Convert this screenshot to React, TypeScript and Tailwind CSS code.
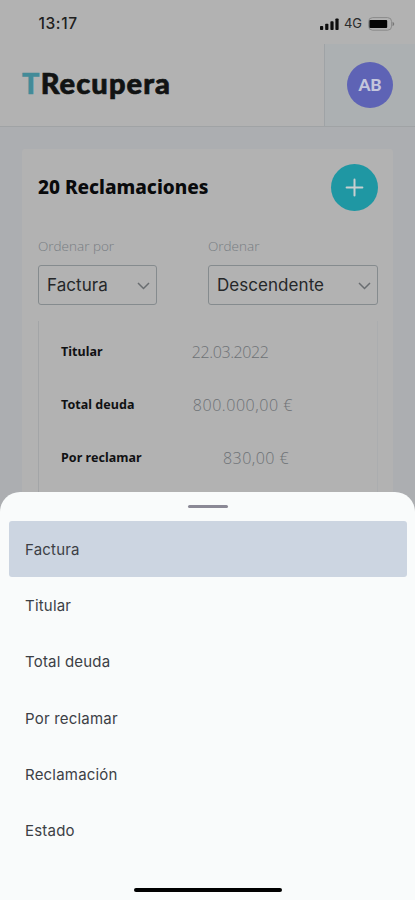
import { useState } from 'react';
import clsx from 'clsx';
import { Plus } from 'lucide-react';

const options = ['Factura', 'Titular', 'Total deuda', 'Por reclamar', 'Reclamación', 'Estado'];

const rows = [
  { label: 'Titular', value: '22.03.2022', style: 'pr-[108.5px] tracking-[-0.4px]' },
  { label: 'Total deuda', value: '800.000,00 €', style: 'pr-[84px] tracking-[0.55px]' },
  { label: 'Por reclamar', value: '830,00 €', style: 'pr-[88px] tracking-[0.45px]' },
];

function StatusBar() {
  return (
    <div className="flex h-11 shrink-0 items-center justify-between pt-[3px] pr-[20px] pl-[38.5px]">
      <span className="font-['Inter',sans-serif] text-[15.5px] font-medium tracking-[0.6px] text-[#202020]">13:17</span>
      <div className="flex items-center">
        <svg width="19" height="12" viewBox="0 0 19 12" fill="#0d0d0d">
          <rect x="0" y="8" width="3.2" height="4" rx="0.8" />
          <rect x="5.2" y="5.8" width="3.2" height="6.2" rx="0.8" />
          <rect x="10.4" y="3.2" width="3.2" height="8.8" rx="0.8" />
          <rect x="15.4" y="0.4" width="3.2" height="11.6" rx="0.8" />
        </svg>
        <span className="ml-[5px] w-[18px] font-['Inter',sans-serif] text-[13px] tracking-[-0.2px] text-[#2b2b2b]">4G</span>
        <svg className="ml-[6px]" width="27" height="14" viewBox="0 0 27 14" fill="none">
          <rect x="0.6" y="0.6" width="23" height="12.6" rx="4" stroke="#8a8a8a" />
          <rect x="1.4" y="3" width="17.8" height="8" rx="1" fill="#050505" />
          <path d="M24.6 4.8v4.4c1-.4 1.6-1.3 1.6-2.2s-.6-1.8-1.6-2.2z" fill="#777" />
        </svg>
      </div>
    </div>
  );
}

function Header() {
  return (
    <header className="flex h-[83px] shrink-0 border-b border-[#a0a3a5]">
      <div className="flex flex-1 items-center pb-[5px] pl-[22px] font-['Lato',sans-serif] text-[29px] leading-none font-black tracking-[1.1px]">
        <span className="text-[#438b98] [-webkit-text-stroke:0.4px_#438b98]">T</span>
        <span className="text-[#111313] [-webkit-text-stroke:0.7px_#111313]">Recupera</span>
      </div>
      <div className="flex w-[91px] items-center border-l border-[#9fa3a6] bg-[#acb0b2] pl-[22px]">
        <div className="flex size-[46px] items-center justify-center rounded-full bg-[#5e63b5] font-['Lato',sans-serif] text-[17px] font-black text-[#c4c6dc]">
          AB
        </div>
      </div>
    </header>
  );
}

function Select({ label, value, className }: { label: string; value: string; className: string }) {
  return (
    <div className={className}>
      <div className="h-[28px] font-['Open_Sans',sans-serif] text-[13.5px] leading-[18px] font-light text-[#777d82]">{label}</div>
      <button
        type="button"
        className="flex h-10 w-full items-center justify-between rounded-[3px] border border-[#858b8e] pt-[2px] pr-[6px] pl-[8px] font-['Inter',sans-serif] text-[17px] tracking-[0.05px] text-[#252729]"
      >
        {value}
        <svg width="13" height="8" viewBox="0 0 13 8" fill="none" stroke="#696d70" strokeWidth="1.5">
          <path d="M1 1l5.5 5.5L12 1" />
        </svg>
      </button>
    </div>
  );
}

export default function App() {
  const [selected, setSelected] = useState('Factura');

  return (
    <div className="relative flex h-[900px] w-[415px] flex-col overflow-hidden bg-[#b2b2b2]">
      <StatusBar />
      <Header />

      <main className="flex-1 bg-[#acaeb1] px-[22px] pt-[22px]">
        <section className="h-full rounded-t-[3px] bg-[#b2b2b2] pt-[15px] pr-[15px] pl-4">
          <div className="flex items-center justify-between">
            <h1 className="font-['Noto_Sans',sans-serif] text-[19px] font-extrabold text-[#090a0c]">20 Reclamaciones</h1>
            <button type="button" className="flex size-[47px] items-center justify-center rounded-full bg-[#1f97a3]">
              <Plus className="size-[27px] text-[#c8cfd0]" strokeWidth={1.8} />
            </button>
          </div>

          <div className="mt-[25.5px] flex justify-between">
            <Select label="Ordenar por" value="Factura" className="w-[119px]" />
            <Select label="Ordenar" value="Descendente" className="w-[170px]" />
          </div>

          <div className="mt-4 h-[300px] border-x border-l-[#a3a5a7] border-r-[#abadaf] pt-[5.5px] pl-[22px]">
            {rows.map((r) => (
              <div key={r.label} className={clsx('flex h-[53px] items-center justify-between', r.style)}>
                <span className="font-['Noto_Sans',sans-serif] text-[12.5px] font-bold tracking-[0.05px] text-[#101113]">{r.label}</span>
                <span className="pb-px font-['Open_Sans',sans-serif] text-[16px] font-light text-[#6d7175]">{r.value}</span>
              </div>
            ))}
          </div>
        </section>
      </main>

      {/* Bottom sheet */}
      <div className="absolute inset-x-0 bottom-0 flex h-[408px] flex-col rounded-t-[20px] bg-[#f9fbfb] pr-[8px] pl-[9px]">
        <div className="mx-auto mt-[13px] h-[3px] w-10 rounded-full bg-[#8b8996]" />
        <ul className="mt-[12.5px]">
          {options.map((o) => (
            <li
              key={o}
              onClick={() => setSelected(o)}
              className={clsx(
                "flex h-[56.3px] items-center rounded-[3px] px-4 pt-[3px] font-['Inter',sans-serif] text-[15px] tracking-[0.2px] text-[#3c4045]",
                o === selected && 'bg-[#ccd5e1]'
              )}
            >
              {o}
            </li>
          ))}
        </ul>
        <div className="mx-auto mt-auto mb-2 h-1 w-[148px] shrink-0 rounded-full bg-black" />
      </div>
    </div>
  );
}
